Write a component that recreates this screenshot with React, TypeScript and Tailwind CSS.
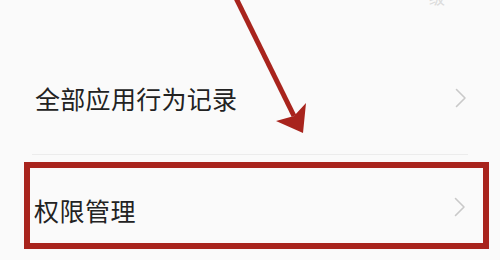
import React from 'react';

const Chevron = () => (
  <svg width="12" height="20" viewBox="0 0 12 20" fill="none" className="shrink-0">
    <path d="M1.5 1.5 L10 10 L1.5 18.5" stroke="#c9c9c9" strokeWidth="1.6" strokeLinecap="round" strokeLinejoin="round" />
  </svg>
);

const App = () => {
  return (
    <div
      className="relative w-[500px] h-[260px] overflow-hidden bg-[#fafafa] text-[#222]"
      style={{ fontFamily: '"Noto Sans CJK SC", "Noto Sans", sans-serif' }}
    >
      {/* previous row, cut off at top */}
      <div className="h-[42px] flex justify-end pr-[55px]">
        <span className="-mt-[14px] text-[16px] leading-[22px] text-[#dcdcdc]">级</span>
      </div>

      {/* Row: all app behaviour records */}
      <div className="h-[112px] flex items-center justify-between pl-[35px] pr-[33px]">
        <span className="text-[25px] leading-none tracking-[0.3px]">全部应用行为记录</span>
        <Chevron />
      </div>

      <div className="mx-[32px] h-px bg-[#ececec]" />

      {/* Highlighted row */}
      <div className="mt-[7px] ml-[24px] w-[465px] h-[87px] border-[6px] border-[#a8241d] flex items-center justify-between pl-[4px] pr-[17px] pt-[10px]">
        <span className="text-[25px] leading-none tracking-[0.5px]">权限管理</span>
        <span className="-mt-[8px]">
          <Chevron />
        </span>
      </div>

      {/* annotation arrow */}
      <svg className="absolute inset-0 pointer-events-none" width="500" height="260" viewBox="0 0 500 260">
        <line x1="234" y1="-6" x2="294" y2="116" stroke="#a8241d" strokeWidth="5" />
        <polygon points="303,133 276,121 294,116 306,103" fill="#a8241d" />
      </svg>
    </div>
  );
};

export default App;
